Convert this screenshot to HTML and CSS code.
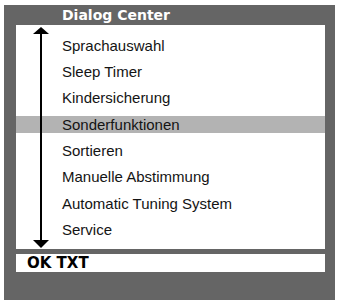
FILE: index.html
```html
<!DOCTYPE html>
<html>
<head>
<meta charset="utf-8">
<link rel="stylesheet" href="styles.css">
</head>
<body>
<div class="frame">
  <div class="title">Dialog Center</div>
  <div class="panel">
    <svg class="arrow" width="16" height="221" viewBox="0 0 16 221">
      <line x1="8" y1="4" x2="8" y2="216" stroke="#000" stroke-width="2"/>
      <polygon points="8,0 16,7 0,7" fill="#000"/>
      <polygon points="0,213 16,213 8,221" fill="#000"/>
    </svg>
    <ul class="list">
      <li class="item">Sprachauswahl</li>
      <li class="item">Sleep Timer</li>
      <li class="item">Kindersicherung</li>
      <li class="item selected">Sonderfunktionen</li>
      <li class="item">Sortieren</li>
      <li class="item">Manuelle Abstimmung</li>
      <li class="item">Automatic Tuning System</li>
      <li class="item">Service</li>
    </ul>
  </div>
  <div class="okbar">OK TXT</div>
</div>
</body>
</html>
```
FILE: styles.css
```css
html, body {
  margin: 0;
  padding: 0;
  background: #ffffff;
}
.frame {
  margin: 5px 0 0 4px;
  width: 331px;
  height: 295px;
  box-sizing: border-box;
  background: #656565;
  padding: 0 10px 0 12px;
  display: flex;
  flex-direction: column;
}
.title {
  height: 20px;
  line-height: 20px;
  padding-left: 46px;
  color: #ffffff;
  font-family: "DejaVu Sans", sans-serif;
  font-weight: bold;
  font-size: 14px;
}
.panel {
  position: relative;
  height: 224px;
  background: #ffffff;
}
.arrow {
  position: absolute;
  left: 17px;
  top: 2px;
  z-index: 2;
}
.list {
  list-style: none;
  margin: 0;
  padding: 11.5px 0 0 0;
  display: flex;
  flex-direction: column;
  gap: 9.4px;
}
.item {
  height: 17px;
  line-height: 17px;
  padding-left: 46px;
  font-family: "Liberation Sans", Arial, sans-serif;
  font-size: 15px;
  color: #141414;
}
.selected {
  background: #b3b3b3;
}
.okbar {
  margin-top: 5px;
  height: 18px;
  line-height: 19px;
  background: #ffffff;
  padding-left: 11px;
  font-family: "DejaVu Sans", sans-serif;
  font-weight: bold;
  font-size: 15px;
  color: #000000;
}
```
